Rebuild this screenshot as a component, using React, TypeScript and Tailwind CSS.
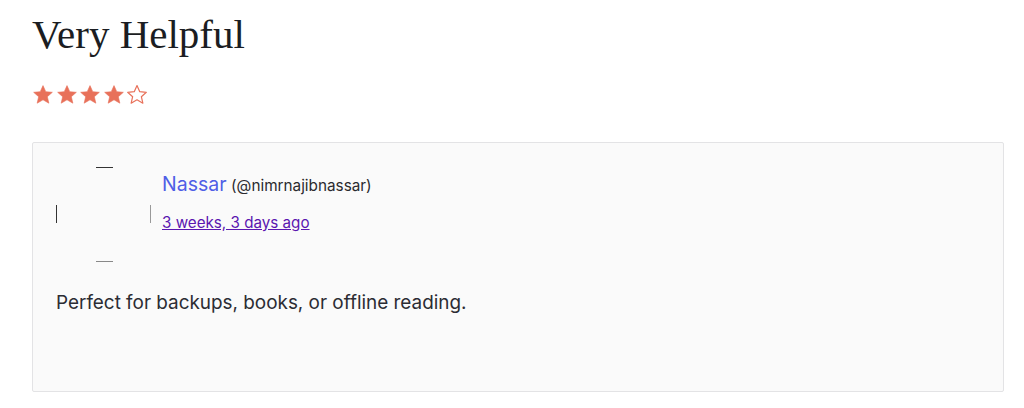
import React from "react";

const STAR_PATH = "M11 1.6l2.75 6.1 6.6.6-5 4.4 1.5 6.5L11 15.8l-5.85 3.4 1.5-6.5-5-4.4 6.6-.6z";

function Star({ filled }: { filled: boolean }) {
  return (
    <svg width="22" height="22" viewBox="0 0 22 22" className="shrink-0">
      <path
        d={STAR_PATH}
        fill={filled ? "#e8715a" : "none"}
        stroke="#e8715a"
        strokeWidth={filled ? 0.6 : 1.2}
        strokeLinejoin="round"
      />
    </svg>
  );
}

function BrokenAvatar() {
  // broken image inside a round frame: only the tangent points show
  return (
    <svg width="96" height="96" viewBox="0 0 96 96" className="shrink-0">
      <line x1="40" y1="0.5" x2="57" y2="0.5" stroke="#333" strokeWidth="1" />
      <line x1="40" y1="94.5" x2="57" y2="94.5" stroke="#888" strokeWidth="1" />
      <line x1="0.5" y1="38" x2="0.5" y2="56" stroke="#333" strokeWidth="1" />
      <line x1="94.5" y1="38" x2="94.5" y2="56" stroke="#999" strokeWidth="1" />
    </svg>
  );
}

export default function App() {
  return (
    <div className="w-[1024px] h-[408px] bg-white pl-8 pt-[14px] overflow-hidden">
      <h1 className="text-[41px] leading-[40px] text-[#1b1d22] font-['Liberation_Serif',serif]">
        Very Helpful
      </h1>

      <div className="flex gap-[1.5px] mt-[30px]">
        <Star filled />
        <Star filled />
        <Star filled />
        <Star filled />
        <Star filled={false} />
      </div>

      <div className="mt-9 w-[972px] h-[250px] border border-[#e3e3e5] bg-[#fafafa] rounded-[2px] pl-[23px] pr-6 pt-6 font-['Inter',sans-serif]">
        <div className="flex gap-[10px]">
          <BrokenAvatar />
          <div className="mt-[3px] flex flex-col gap-3">
            <div className="leading-[28px]">
              <span className="text-[19.5px] text-[#4f5ee6]">Nassar</span>{" "}
              <span className="text-[15.3px] text-[#2a2a2e]">(@nimrnajibnassar)</span>
            </div>
            <a href="#" className="text-[15.2px] leading-[22px] text-[#5b16b0] underline">
              3 weeks, 3 days ago
            </a>
          </div>
        </div>
        <p className="mt-[26px] text-[18.9px] leading-[27px] text-[#2b2c33]">
          Perfect for backups, books, or offline reading.
        </p>
      </div>
    </div>
  );
}
